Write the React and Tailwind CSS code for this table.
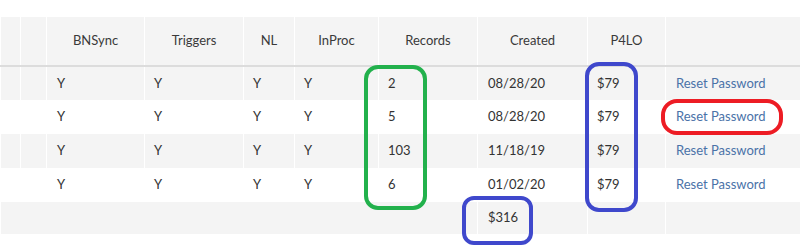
import React from "react";

const cols = [20, 26, 98, 99, 51, 84, 99, 110, 78, 135];
const headers = ["", "", "BNSync", "Triggers", "NL", "InProc", "Records", "Created", "P4LO", ""];
const rows = [
  ["2", "08/28/20"],
  ["5", "08/28/20"],
  ["103", "11/18/19"],
  ["6", "01/02/20"],
];

export default function App() {
  return (
    <div className="relative w-[800px] h-[250px] bg-white overflow-hidden" style={{ fontFamily: "Lato, 'Open Sans', sans-serif" }}>
      <div className="h-[17px]" />
      <table className="border-collapse table-fixed w-[800px] text-[13px] text-[#333]">
        <colgroup>
          {cols.map((w, i) => (
            <col key={i} style={{ width: w }} />
          ))}
        </colgroup>
        <thead>
          <tr className="h-[49px] bg-[#f4f4f4] border-b-2 border-[#dcdcdc]">
            {headers.map((h, i) => (
              <th key={i} className="font-normal text-center text-[#3a3a3a] border-x border-white p-0">
                {h}
              </th>
            ))}
          </tr>
        </thead>
        <tbody>
          {rows.map((r, i) => (
            <tr key={i} className={`h-[34px] ${i % 2 === 0 ? "bg-[#f4f4f4]" : "bg-white"}`}>
              <td className="border-x border-white" />
              <td className="border-x border-white" />
              <td className="border-x border-white pl-[10px]">Y</td>
              <td className="border-x border-white pl-[9px]">Y</td>
              <td className="border-x border-white pl-[9px]">Y</td>
              <td className="border-x border-white pl-[9px]">Y</td>
              <td className="border-x border-white pl-[9px]">{r[0]}</td>
              <td className="border-x border-white pl-[10px]">{r[1]}</td>
              <td className="border-x border-white pl-[9px]">$79</td>
              <td className="border-x border-white pl-[10px] text-[#4a72a8]">Reset Password</td>
            </tr>
          ))}
          <tr className="h-[32px] bg-[#f4f4f4]">
            <td colSpan={7} />
            <td className="border-x border-white pl-[10px]">$316</td>
            <td className="border-x border-white" />
            <td className="border-x border-white" />
          </tr>
        </tbody>
      </table>

      <div className="absolute left-[364px] top-[65px] w-[63px] h-[145px] border-[4px] border-[#22b14c] rounded-[14px]" />
      <div className="absolute left-[585px] top-[62px] w-[53px] h-[150px] border-[4px] border-[#3f48cc] rounded-[14px]" />
      <div className="absolute left-[661px] top-[99px] w-[122px] h-[36px] border-[4px] border-[#ed1c24] rounded-[16px]" />
      <div className="absolute left-[462px] top-[196px] w-[71px] h-[49px] border-[4px] border-[#3f48cc] rounded-[12px]" />
    </div>
  );
}
